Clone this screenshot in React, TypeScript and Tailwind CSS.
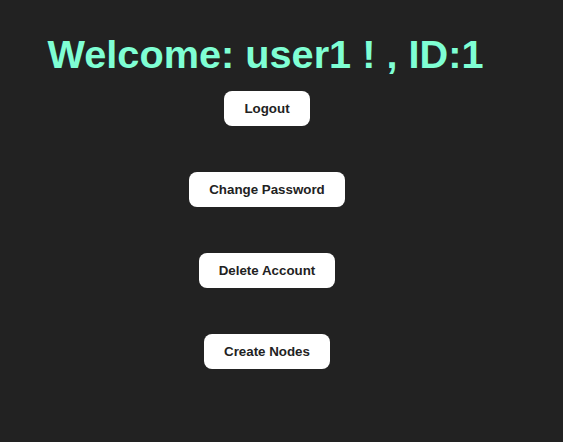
const buttons = ["Change Password", "Delete Account", "Create Nodes"];

function Btn({ label }: { label: string }) {
  return (
    <button className="h-[35px] px-5 rounded-lg bg-white text-[13.33px] font-bold text-[#222222]">
      {label}
    </button>
  );
}

export default function App() {
  return (
    <div
      className="min-h-screen w-full bg-[#222222]"
      style={{ fontFamily: '"Liberation Sans", Arial, sans-serif' }}
    >
      <div className="flex flex-col items-center pr-[29px] pt-[31px]">
        <h1 className="-ml-[3px] text-[39.7px] leading-[46px] font-bold text-[#7fffd4]">
          Welcome: user1 ! , ID:1
        </h1>
        <div className="mt-[14px]">
          <Btn label="Logout" />
        </div>
        <div className="mt-[46px] flex flex-col items-center gap-[46px]">
          {buttons.map((b) => (
            <Btn key={b} label={b} />
          ))}
        </div>
      </div>
    </div>
  );
}
